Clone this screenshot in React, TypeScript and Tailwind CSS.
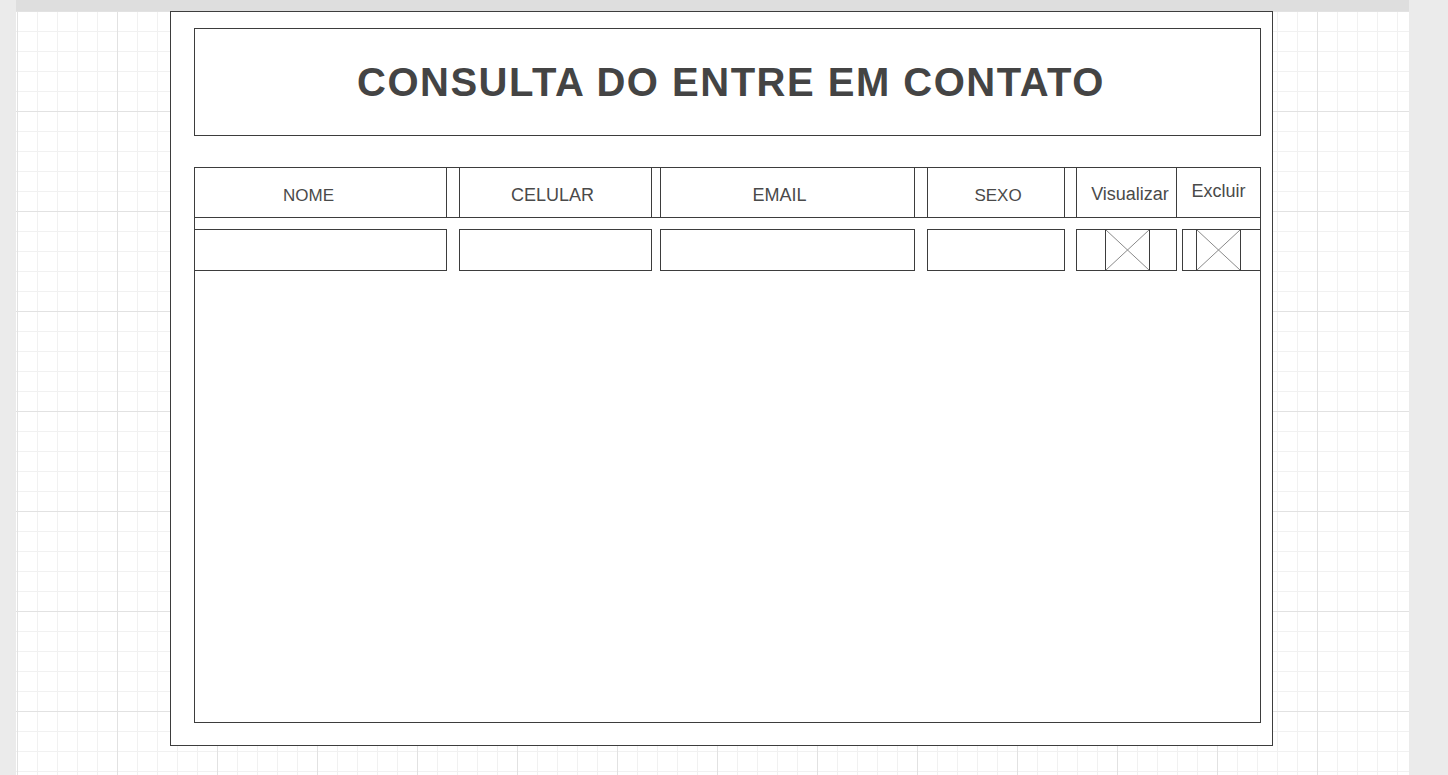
const ink = "border-[#3d3d3d]";

function XImage() {
  return (
    <div className={`-my-px h-[42px] w-[45px] shrink-0 border ${ink}`}>
      <svg width="43" height="40" viewBox="0 0 43 40" className="block">
        <line x1="0" y1="0" x2="43" y2="40" stroke="#8a8a8a" strokeWidth="1" />
        <line x1="43" y1="0" x2="0" y2="40" stroke="#8a8a8a" strokeWidth="1" />
      </svg>
    </div>
  );
}

export default function App() {
  return (
    <div className="flex h-[775px] w-full overflow-hidden bg-[#ebebeb] font-['Liberation_Sans',Arial,sans-serif]">
      <div className="w-[16px] shrink-0" />
      <div className="flex w-[1393px] shrink-0 flex-col">
        <div className="h-[11px] bg-[#dedede]" />
        <div className="flex-1 bg-white bg-[linear-gradient(to_right,#e2e2e2_1px,transparent_1px),linear-gradient(to_bottom,#e2e2e2_1px,transparent_1px),linear-gradient(to_right,#f1f1f1_1px,transparent_1px),linear-gradient(to_bottom,#f1f1f1_1px,transparent_1px)] bg-[size:100px_100px,100px_100px,20px_20px,20px_20px] bg-[position:1px_0px,1px_0px,1px_0px,1px_0px] pl-[154px]">
          <div className={`flex h-[735px] w-[1103px] flex-col border ${ink} bg-white pl-[23px] pt-[16px]`}>
            {/* titulo */}
            <div className={`flex h-[108px] w-[1067px] items-center justify-center border ${ink} pl-[7px]`}>
              <h1 className="text-[40px] font-bold tracking-[1.5px] text-[#444444]">CONSULTA DO ENTRE EM CONTATO</h1>
            </div>

            {/* tabela */}
            <div className={`mt-[31px] h-[556px] w-[1067px] border ${ink} text-[#4a4a4a]`}>
              <div className={`flex h-[50px] border-b ${ink} leading-[20px]`}>
                <div className={`flex w-[252px] shrink-0 justify-center border-r ${ink} pr-[24px] pt-[18px] text-[17px]`}>NOME</div>
                <div className="w-[12px] shrink-0" />
                <div className={`flex w-[193px] shrink-0 justify-center border-x ${ink} pr-[6px] pt-[17px] text-[18px]`}>CELULAR</div>
                <div className="w-[8px] shrink-0" />
                <div className={`flex w-[255px] shrink-0 justify-center border-x ${ink} pr-[16px] pt-[17px] text-[18px]`}>EMAIL</div>
                <div className="w-[12px] shrink-0" />
                <div className={`flex w-[138px] shrink-0 justify-center border-x ${ink} pl-[4px] pt-[18px] text-[17px]`}>SEXO</div>
                <div className="w-[11px] shrink-0" />
                <div className={`flex w-[101px] shrink-0 justify-center border-x ${ink} pl-[7px] pt-[16px] text-[18px]`}>Visualizar</div>
                <div className="flex flex-1 justify-center pt-[13px] text-[18px]">Excluir</div>
              </div>

              <div className="mt-[11px] flex h-[42px]">
                <div className={`w-[252px] shrink-0 border-y border-r ${ink}`} />
                <div className="w-[12px] shrink-0" />
                <div className={`w-[193px] shrink-0 border ${ink}`} />
                <div className="w-[8px] shrink-0" />
                <div className={`w-[255px] shrink-0 border ${ink}`} />
                <div className="w-[12px] shrink-0" />
                <div className={`w-[138px] shrink-0 border ${ink}`} />
                <div className="w-[11px] shrink-0" />
                <div className={`flex w-[101px] shrink-0 border ${ink} pl-[28px]`}>
                  <XImage />
                </div>
                <div className="w-[5px] shrink-0" />
                <div className={`flex flex-1 border-y border-l ${ink} pl-[13px]`}>
                  <XImage />
                </div>
              </div>
            </div>
          </div>
        </div>
      </div>
      <div className="flex-1" />
    </div>
  );
}
